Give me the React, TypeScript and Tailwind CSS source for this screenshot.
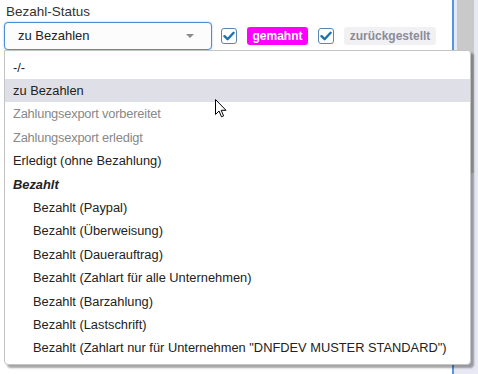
import React from "react";

const font = { fontFamily: '"Liberation Sans", Arial, sans-serif' };

function Check() {
  return (
    <div className="w-[16px] h-[16px] rounded-[3px] border border-[#5a86ad] bg-white flex items-center justify-center">
      <svg width="12" height="10" viewBox="0 0 12 10">
        <path d="M1.5 5.2 L4.6 8.2 L10.6 1.8" fill="none" stroke="#1a74b0" strokeWidth="2.4" strokeLinecap="round" strokeLinejoin="round" />
      </svg>
    </div>
  );
}

type Item = { label: string; kind?: "disabled" | "group" | "sub" | "active" };

const items: Item[] = [
  { label: "-/-" },
  { label: "zu Bezahlen", kind: "active" },
  { label: "Zahlungsexport vorbereitet", kind: "disabled" },
  { label: "Zahlungsexport erledigt", kind: "disabled" },
  { label: "Erledigt (ohne Bezahlung)" },
  { label: "Bezahlt", kind: "group" },
  { label: "Bezahlt (Paypal)", kind: "sub" },
  { label: "Bezahlt (Überweisung)", kind: "sub" },
  { label: "Bezahlt (Dauerauftrag)", kind: "sub" },
  { label: "Bezahlt (Zahlart für alle Unternehmen)", kind: "sub" },
  { label: "Bezahlt (Barzahlung)", kind: "sub" },
  { label: "Bezahlt (Lastschrift)", kind: "sub" },
  { label: 'Bezahlt (Zahlart nur für Unternehmen "DNFDEV MUSTER STANDARD")', kind: "sub" },
];

export default function App() {
  return (
    <div className="relative w-[478px] h-[374px] bg-white overflow-hidden flex text-[#222]" style={font}>
      <div className="w-[452px] h-full pl-[4px] pt-[3px] flex flex-col">
        <div className="pl-[2px] text-[13.5px] leading-[17px] text-[#333]">Bezahl-Status</div>
        <div className="mt-[2px] flex items-center">
          <div className="w-[208px] h-[28px] rounded-[4px] border border-[#4a8fd6] shadow-[0_0_2px_rgba(74,143,214,0.6)] bg-[#fcfcfc] flex items-center justify-between pl-[13px] pr-[17px]">
            <span className="text-[13px] text-[#222]">zu Bezahlen</span>
            <svg width="8" height="4" viewBox="0 0 8 4">
              <path d="M0 0 L8 0 L4 4 Z" fill="#8a8a8a" />
            </svg>
          </div>
          <div className="ml-[9px]">
            <Check />
          </div>
          <div className="ml-[10px] w-[61px] h-[18px] rounded-[3px] bg-[#ff00ff] text-white font-bold text-[12px] flex items-center justify-center">
            gemahnt
          </div>
          <div className="ml-[10px]">
            <Check />
          </div>
          <div className="ml-[10px] w-[92px] h-[18px] rounded-[3px] bg-[#f1f1f4] text-[#8c8c98] font-bold text-[12px] flex items-center justify-center">
            zurückgestellt
          </div>
        </div>
      </div>
      <div className="w-[2px] h-full bg-[#5596dc]" />
      <div className="flex-1 h-full bg-[#e8e8f4] flex pl-[3px] pr-[4px]">
        <div className="w-full h-[173px] bg-[#c9c9c9]" />
      </div>

      <div className="absolute left-[4px] top-[50px] w-[467px] h-[315px] bg-white border border-[#c4c4c4] rounded-b-[4px] rounded-tr-[3px] shadow-[3px_3px_2px_rgba(0,0,0,0.35)] pt-[4.6px] text-[12.85px]">
        {items.map((it, i) => (
          <div
            key={i}
            className={
              "h-[23.4px] flex items-center whitespace-nowrap " +
              (it.kind === "sub" ? "pl-[28px] text-[#222] " : "pl-[8px] ") +
              (it.kind === "active" ? "bg-[#dfdfe7] text-[#222] " : "") +
              (it.kind === "disabled" ? "text-[#888] tracking-[-0.2px] " : "") +
              (it.kind === "group" ? "font-bold italic text-[#222] " : "") +
              (it.kind === undefined ? "text-[#222] " : "")
            }
          >
            {it.label}
          </div>
        ))}
      </div>

      <svg className="absolute left-[215px] top-[99px]" width="12" height="19" viewBox="0 0 12 19">
        <path
          d="M0.5 0.5 L0.5 15.5 L4 12 L6.5 17.8 L8.6 16.9 L6.2 11.3 L11 11.3 Z"
          fill="white"
          stroke="black"
          strokeWidth="1"
          strokeLinejoin="miter"
        />
      </svg>
    </div>
  );
}
